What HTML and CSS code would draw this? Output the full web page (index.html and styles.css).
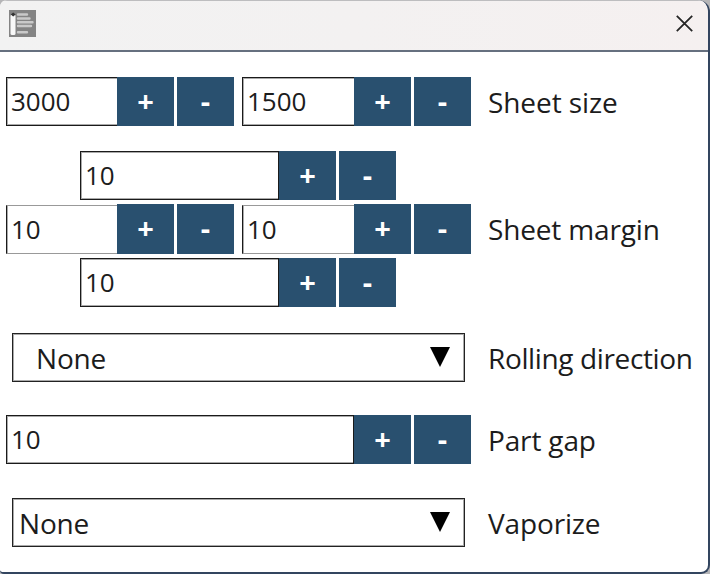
FILE: index.html
```
<!DOCTYPE html>
<html lang="en">
<head>
<meta charset="utf-8">
<title>Sheet settings</title>
<link rel="stylesheet" href="styles.css">
</head>
<body>
<div class="window">
  <header class="titlebar">
    <svg class="app-icon" width="27" height="27" viewBox="0 0 27 27">
      <rect width="27" height="27" fill="#848484"/>
      <rect x="1.500" y="4.500" width="5" height="20.500" rx="1.500" fill="#f8f8f8"/>
      <path d="M1.800 4.500L4.200 2.500L6.600 4.500L4.200 6.500Z" fill="#333"/>
      <path d="M9 4.500H18M9 8.500H20.500M9 12.300H23.500M9 16H22M9 22.300H18" stroke="#c9c9c9" stroke-width="2.400" stroke-linecap="round"/>
    </svg>
    <svg class="close" width="17" height="17" viewBox="0 0 17 17"><path d="M.8.8L16.200 16.200M16.200.8L.8 16.200" stroke="#262626" stroke-width="1.800"/></svg>
  </header>
  <main class="form">
    <section class="row">
      <div class="controls">
        <div class="stepper"><div class="field short">3000</div><div class="btn">+</div><div class="btn">-</div></div>
        <div class="stepper"><div class="field short wider">1500</div><div class="btn">+</div><div class="btn">-</div></div>
      </div>
      <div class="label">Sheet size</div>
    </section>
    <section class="row margins">
      <div class="controls stack">
        <div class="stepper middle"><div class="field medium">10</div><div class="btn">+</div><div class="btn">-</div></div>
        <div class="pair">
          <div class="stepper"><div class="field short soft">10</div><div class="btn">+</div><div class="btn">-</div></div>
          <div class="stepper"><div class="field short wider soft">10</div><div class="btn">+</div><div class="btn">-</div></div>
        </div>
        <div class="stepper middle"><div class="field medium">10</div><div class="btn">+</div><div class="btn">-</div></div>
      </div>
      <div class="label snug">Sheet margin</div>
    </section>
    <section class="row">
      <div class="controls"><div class="select indented"><span>None</span><svg width="20" height="20" viewBox="0 0 20 20"><path d="M0 0H20L10 20Z"/></svg></div></div>
      <div class="label tight">Rolling direction</div>
    </section>
    <section class="row">
      <div class="controls"><div class="stepper"><div class="field long">10</div><div class="btn">+</div><div class="btn">-</div></div></div>
      <div class="label snug">Part gap</div>
    </section>
    <section class="row">
      <div class="controls"><div class="select"><span>None</span><svg width="20" height="20" viewBox="0 0 20 20"><path d="M0 0H20L10 20Z"/></svg></div></div>
      <div class="label snug">Vaporize</div>
    </section>
  </main>
</div>
</body>
</html>
```
FILE: styles.css
```
* { box-sizing: border-box; }
body {
  margin: 0;
  background: #b5b5b7;
  font-family: "Open Sans", sans-serif;
  color: #1c1c1c;
}
.window {
  width: 710px;
  height: 574px;
  border: solid #33455f;
  border-width: 0 2px 2px 0;
  border-radius: 7px 12px 9px 4px;
  background: #fff;
  overflow: hidden;
}
.titlebar {
  display: flex;
  justify-content: space-between;
  height: 52px;
  padding: 9px 15px 0 9px;
  border-top: 1px solid #bdbdbf;
  border-bottom: 2px solid #66707f;
  background: linear-gradient(90deg, #f2f2f2, #f3f1f1 50%, #f5f0f0);
}
.close { margin-top: 5px; }
.form {
  display: flex;
  flex-direction: column;
  gap: 34px;
  padding: 25px 0 0 6px;
}
.row { display: flex; align-items: center; height: 49px; }
.row.margins { height: 156px; margin: -9px 0 -8px; }
.row:nth-child(4) { margin-top: -1px; }
.controls { display: flex; gap: 8px; width: 482px; }
.stack { flex-direction: column; gap: 4px; }
.pair { display: flex; gap: 8px; height: 50px; }
.stepper { display: flex; height: 49px; }
.pair .stepper { height: 50px; }
.middle { margin-left: 74px; }
.field {
  border: 1px solid #1a1a1a;
  border-right: 0;
  box-shadow: inset 1px 1px 0 #aaa, inset 0 -1px 0 #aaa;
  padding-left: 4px;
  font-size: 26px;
  line-height: 47px;
}
.short { width: 111px; }
.wider { width: 112px; }
.medium { width: 199px; border-right: 1px solid #1a1a1a; }
.long { width: 348px; border-right: 1px solid #1a1a1a; }
.soft {
  margin-top: 1px;
  border-top-color: #999;
  border-bottom-color: #999;
  box-shadow: inset 1px 0 0 #aaa;
}
.btn {
  width: 57px;
  background: #29506f;
  color: #fff;
  font-size: 29px;
  font-weight: 700;
  line-height: 47px;
  text-align: center;
}
.btn + .btn { margin-left: 3px; }
.select {
  display: flex;
  align-items: center;
  justify-content: space-between;
  width: 453px;
  height: 49px;
  margin-left: 6px;
  padding: 0 14px 0 6px;
  border: 1px solid #222;
  box-shadow: inset 0 0 0 1px #aaa;
  font-size: 28px;
  letter-spacing: -.2px;
}
.indented { padding-left: 23px; }
.select svg { margin-bottom: 2px; }
.label { font-size: 28px; white-space: nowrap; letter-spacing: -.08px; }
.snug { letter-spacing: -.15px; }
.tight { letter-spacing: -.37px; }
```
